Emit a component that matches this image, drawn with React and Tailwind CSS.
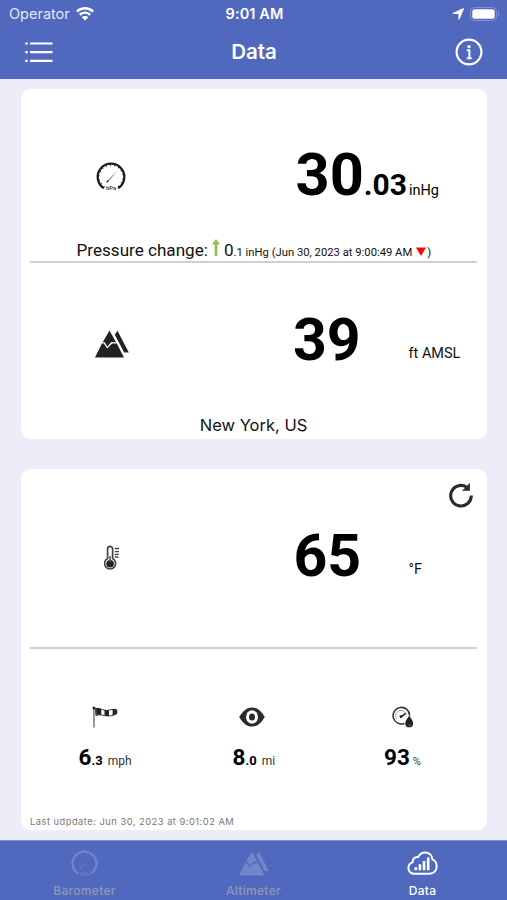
import clsx from "clsx";

const wind = { whole: "6", fraction: ".3", unit: "mph" };
const visibility = { whole: "8", fraction: ".0", unit: "mi" };
const humidity = { whole: "93", fraction: "", unit: "%" };

function GaugeIcon({ className }) {
  return (
    <svg viewBox="0 0 32 32" className={className} fill="none">
      <path
        d="M8.8 27.2A13.3 13.3 0 1 1 23.2 27.2"
        stroke="currentColor"
        strokeWidth="2.3"
      />
      <path
        d="M8.8 27.2A13.3 13.3 0 1 1 23.2 27.2"
        stroke="currentColor"
        strokeWidth="1.6"
        strokeDasharray="1 3.7"
        transform="translate(1.5 1.5) scale(0.905)"
      />
      <path d="M12.4 20 23.2 8.6 13.2 20.8z" fill="currentColor" opacity="0.7" />
      <circle cx="12.4" cy="20.5" r="0.9" fill="currentColor" />
      <text
        x="16"
        y="29.3"
        textAnchor="middle"
        fontSize="5.8"
        fontWeight="700"
        fontFamily="Roboto, sans-serif"
        fill="currentColor"
        opacity="0.8"
      >
        hPa
      </text>
    </svg>
  );
}

function MountainIcon({ className }) {
  return (
    <svg viewBox="0 0 34 28" className={className} fill="currentColor">
      <path d="M14.5 0.5 21 12.2l-4.7-.3-3.9 4.8-2.7-4.4-2-.1z" />
      <path d="M6.9 13.6h2l3.3 5 4.9-5.2 4.7.2L29 27.5H0z" />
      <path d="m19.8 4.700 2.700-3.900 11.300 21.600h-4.600z" />
    </svg>
  );
}

function ThermometerIcon() {
  return (
    <svg viewBox="0 0 16 26" className="h-[26px] w-4" fill="none">
      <path
        d="M3.6 13.6V3.8a2.5 2.5 0 0 1 5 0v9.8a5.5 5.5 0 1 1-5 0z"
        stroke="#444"
        strokeWidth="1.7"
      />
      <circle cx="6.1" cy="18.8" r="3.8" fill="#222" />
      <path d="M6.1 11v6" stroke="#555" strokeWidth="1.6" />
      <path
        d="M10.8 3.5h4.2M10.8 6.6h4.2M10.8 9.4h4M10.8 12h3.5"
        stroke="#444"
        strokeWidth="1.4"
      />
    </svg>
  );
}

function WindsockIcon() {
  return (
    <svg viewBox="0 0 26 22" className="h-[22px] w-[26px]" fill="none">
      <path d="M2 1v20.5" stroke="#444" strokeWidth="1.1" />
      <circle cx="2" cy="2" r="1.5" fill="#222" />
      <path
        d="M3.5 2.4c4-.8 7 2 11 2 3 .1 6-1.6 9.8-1 .8 1.5.8 3 .2 4.500-3 1.500-6 2.300-9.500 2-4-.4-7-1.800-11.100-.6z"
        stroke="#222"
        strokeWidth="0.9"
      />
      <path
        d="M4 2.3c1.8-.2 3 0 5.2.6v6.200c-1.900-.4-3.400-.3-4.900.2zM12.500 4.100c1.500.3 3 .4 4.500.1v5.700c-1.500.2-3.200 0-4.500-.3zM20.600 3.500c1.300-.3 2.500-.3 3.700-.1.800 1.500.8 3 .2 4.500-1.300.7-2.500 1.100-3.900 1.500z"
        fill="#222"
      />
    </svg>
  );
}

function EyeIcon() {
  return (
    <svg viewBox="0 0 26 20" className="h-5 w-[26px]">
      <path
        d="M.2 10C4 3.6 8 .4 13 .4S22 3.6 25.8 10C22 16.4 18 19.6 13 19.6S4 16.4.2 10z"
        fill="#2a2a2a"
      />
      <ellipse cx="13" cy="10" rx="6" ry="6.8" fill="#fff" />
      <ellipse cx="13" cy="10" rx="3" ry="3.6" fill="#2a2a2a" />
    </svg>
  );
}

function HumidityIcon() {
  return (
    <svg viewBox="0 0 22 22" className="h-[22px] w-[22px]" fill="none">
      <path
        d="M12.5 17.4A8.3 8.3 0 1 1 17.7 9.5"
        stroke="#333"
        strokeWidth="1.6"
      />
      <path
        d="M5 13.2a5.3 5.3 0 1 1 9.1-5"
        stroke="#777"
        strokeWidth="1"
        strokeDasharray="1.5 .7"
      />
      <path d="m8.3 11.3 5.500-4" stroke="#222" strokeWidth="1.5" />
      <circle cx="9" cy="10.6" r="1.4" fill="#222" />
      <path
        d="M17.2 9.6c2.2 3.600 3.900 5.400 3.900 7.800a3.900 3.900 0 0 1-7.800 0c0-2.400 1.700-4.200 3.900-7.800z"
        fill="#222"
      />
      <path d="M18.7 18.5c-.3.7-.8 1-1.5 1.100" stroke="#bbb" strokeWidth=".6" />
    </svg>
  );
}

function RefreshIcon() {
  return (
    <svg viewBox="0 0 26 26" className="h-[26px] w-[26px]" fill="none">
      <path
        d="M23.3 13.5A10.3 10.3 0 1 1 18.5 5"
        stroke="#2b2b2b"
        strokeWidth="3.1"
      />
      <path d="M21.9.8v7.900h-8.100l3.200-2.700z" fill="#2b2b2b" />
    </svg>
  );
}

function CloudIcon({ className }) {
  return (
    <svg viewBox="0 0 32 26" className={className} fill="none">
      <path
        d="M7.8 23.7C4.2 23.7 1.3 21.2 1.3 17.7c0-3 1.8-5.2 4.4-5.9-.2-3.4 2.500-6.200 5.800-5.400C13 3.300 15.700 1.600 18.800 1.600c4.200 0 7.300 3 7.500 7.200 2.700 1.200 4.400 4 4.400 7.200 0 4.500-3 7.700-7.200 7.700z"
        stroke="currentColor"
        strokeWidth="2"
      />
      <path
        d="M9 16.8v3.200M13.3 13.8V20M17.6 10.3V20M21.9 6.8V20"
        stroke="currentColor"
        strokeWidth="2.7"
      />
    </svg>
  );
}

function StatusBar() {
  return (
    <div className="flex h-[27px] items-center justify-between pl-[9px] pr-[7px]">
      <div className="flex w-[210px] items-center gap-[6px]">
        <span className="text-[14.5px] text-[#e3e8fb]">Operator</span>
        <svg viewBox="0 0 18 14" className="h-[14px] w-[18px]" fill="none">
          <path
            d="M.9 4.6a11.5 11.5 0 0 1 16.2 0M3.8 7.800a7.400 7.400 0 0 1 10.400 0"
            stroke="#fff"
            strokeWidth="2.4"
          />
          <path d="M9 13.5 5.7 10.3a4.7 4.7 0 0 1 6.6 0z" fill="#fff" />
        </svg>
      </div>
      <span className="text-[14.5px] font-semibold tracking-[0.1px]">9:01 AM</span>
      <div className="flex w-[210px] items-center justify-end gap-[6px]">
        <svg viewBox="0 0 12 12" className="h-3 w-3">
          <path
            d="M11.3.8 7 10.900V5.500H1.200z"
            fill="#fff"
            stroke="#fff"
            strokeWidth="1.2"
            strokeLinejoin="round"
          />
        </svg>
        <svg viewBox="0 0 30 14" className="h-[14px] w-[30px]">
          <rect x=".5" y=".5" width="26" height="13" rx="4" fill="none" stroke="#8293d4" />
          <rect x="2.3" y="2.3" width="22.4" height="9.4" rx="2.5" fill="#fff" />
          <path d="M28 4.7c1.8.8 1.8 3.8 0 4.600z" fill="#8293d4" />
        </svg>
      </div>
    </div>
  );
}

function Header() {
  return (
    <header className="h-[79px] bg-[#5069be] text-white">
      <StatusBar />
      <div className="flex h-[50px] items-center justify-between pl-[25px] pr-[24px]">
        <svg viewBox="0 0 28 22" className="h-[22px] w-7" stroke="#fff" strokeWidth="2.2">
          <path d="M.3 2.500h2.400M5 2.500h22.500M.3 11.200h2.400M5 11.200h22.500M.3 19.900h2.400M5 19.900h22.500" />
        </svg>
        <h1 className="text-[20.5px] font-semibold">Data</h1>
        <svg viewBox="0 0 28 28" className="h-7 w-7" fill="none">
          <circle cx="14" cy="14" r="12.4" stroke="#fff" strokeWidth="2.2" />
          <circle cx="14" cy="8.6" r="1.7" fill="#fff" />
          <path d="M11.8 12.200h2.600v8M11.800 20.300h4.900" stroke="#fff" strokeWidth="2" />
        </svg>
      </div>
    </header>
  );
}

function Metric({ icon, whole, fraction, unit, unitSize, className }) {
  return (
    <div className={clsx("flex flex-col", className)}>
      <div className="flex h-[22px] items-center">{icon}</div>
      <div className="mt-[18px] flex items-baseline text-[22.5px] leading-none font-bold text-black">
        {whole}
        <span className="text-[13px]">{fraction}</span>
        <span className={clsx("font-normal text-[#333]", unitSize)}>{unit}</span>
      </div>
    </div>
  );
}

function Tab({ icon, label, active }) {
  return (
    <div
      className={clsx(
        "flex flex-1 flex-col items-center pt-2",
        active ? "text-white" : "text-[#7385cb]",
      )}
    >
      <div className="flex h-7 items-center">{icon}</div>
      <span
        className={clsx(
          "mt-[7px] text-[12px] leading-[14px] font-medium tracking-[0.3px]",
          active ? "text-white" : "text-[#8f97b5]",
        )}
      >
        {label}
      </span>
    </div>
  );
}

export default function App() {
  return (
    <div className="flex h-[900px] w-[507px] flex-col overflow-hidden bg-[#ededf9] font-[Inter,sans-serif]">
      <Header />

      <main className="flex-1 px-[20.5px] pt-[9.5px] font-[Roboto,sans-serif] text-[#111]">
        <section className="h-[350px] rounded-[9px] bg-white px-[9.5px]">
          {/* Pressure */}
          <div className="h-[172.5px] pt-[57.5px]">
            <div className="flex h-[60px] items-start">
              <GaugeIcon className="mt-[15px] ml-[65px] h-8 w-8 text-[#1c1c1c]" />
              <div className="ml-[168.5px] flex items-baseline leading-none text-black">
                <span className="text-[59.5px] font-bold">30</span>
                <span className="text-[30px] font-bold">.03</span>
                <span className="ml-[2px] text-[14.5px]">inHg</span>
              </div>
            </div>
            <div className="mt-[33px] ml-[46.5px] flex items-baseline text-[17.1px] leading-none whitespace-nowrap">
              <span>Pressure change:</span>
              <svg viewBox="0 0 8 17" className="ml-[4px] h-[17px] w-2">
                <path d="M4 0 8 5.5H5.3V17H2.7V5.5H0z" fill="#8bc34a" />
              </svg>
              <span className="ml-1">0</span>
              <span className="text-[11.25px]">
                .1 inHg (Jun 30, 2023 at 9:00:49 AM
              </span>
              <svg viewBox="0 0 10 9" className="ml-1 h-[9px] w-[10px]">
                <path d="M0 .5h10L5 9z" fill="#f10b0b" />
              </svg>
              <span className="ml-px text-[11.25px]">)</span>
            </div>
          </div>

          <div className="h-[2px] bg-[#d0d0d0]" />

          {/* Altitude */}
          <div className="pt-[46.5px]">
            <div className="flex h-[60px] items-start">
              <MountainIcon className="mt-[20px] ml-[64.5px] h-7 w-[34px] text-[#222]" />
              <span className="ml-[164.5px] w-[115.5px] text-[59px] leading-none font-bold text-black">
                39
              </span>
              <span className="mt-[37px] text-[14.5px] leading-none">ft AMSL</span>
            </div>
            <p className="mt-[47.5px] text-center font-[Inter,sans-serif] text-[16.5px] leading-none">
              New York, US
            </p>
          </div>
        </section>

        <section className="mt-[30px] h-[361px] rounded-[9px] bg-white px-[9.5px]">
          {/* Temperature */}
          <div className="h-[178px] pt-[13px]">
            <div className="flex h-[26px] justify-end pr-[3px]">
              <RefreshIcon />
            </div>
            <div className="mt-[18.5px] flex h-[60px] items-start">
              <div className="mt-[18.5px] ml-[74px]">
                <ThermometerIcon />
              </div>
              <span className="ml-[173.5px] w-[115px] text-[59px] leading-none font-bold text-black">
                65
              </span>
              <span className="mt-[37px] text-[14.5px] leading-none">°F</span>
            </div>
          </div>

          <div className="h-[2px] bg-[#d0d0d0]" />

          {/* Wind, visibility, humidity */}
          <div className="flex h-[162.5px] pt-[57.5px]">
            <Metric
              className="w-[154px] pl-[48.5px] [&>div:first-child]:pl-[13.5px]"
              icon={<WindsockIcon />}
              unitSize="ml-[5px] text-[12px]"
              {...wind}
            />
            <Metric
              className="w-[151px] pl-[48.5px] [&>div:first-child]:pl-[6.5px]"
              icon={<EyeIcon />}
              unitSize="ml-[5px] text-[12px]"
              {...visibility}
            />
            <Metric
              className="pl-[49px] [&>div:first-child]:pl-[8px]"
              icon={<HumidityIcon />}
              unitSize="ml-[3px] text-[11px]"
              {...humidity}
            />
          </div>

          <p className="mt-[6px] font-[Inter,sans-serif] text-[9.3px] leading-none tracking-[0.5px] text-[#777]">
            Last udpdate: Jun 30, 2023 at 9:01:02 AM
          </p>
        </section>
      </main>

      <nav className="flex h-[60px] border-t border-[#7f8fc9] bg-[#5069be]">
        <Tab icon={<GaugeIcon className="h-[29px] w-[29px]" />} label="Barometer" />
        <Tab icon={<MountainIcon className="h-[25px] w-[30px]" />} label="Altimeter" />
        <Tab icon={<CloudIcon className="h-[25px] w-[31px]" />} label="Data" active />
      </nav>
    </div>
  );
}
